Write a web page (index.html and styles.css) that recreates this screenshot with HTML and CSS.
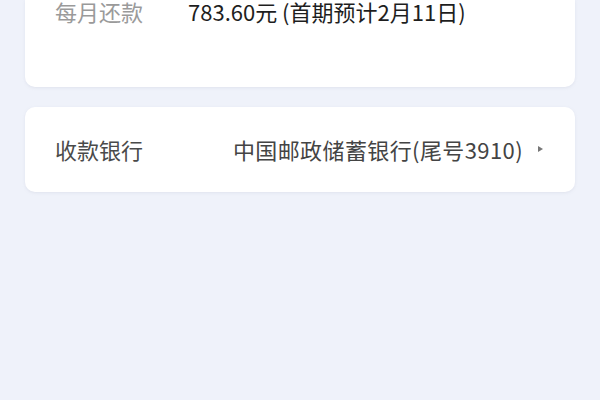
FILE: index.html
```html
<!DOCTYPE html>
<html lang="zh">
<head>
<meta charset="utf-8">
<link rel="stylesheet" href="styles.css">
</head>
<body>
<div class="page">
  <div class="card card-top">
    <div class="row">
      <span class="label muted">每月还款</span>
      <span class="value">783.60元 (首期预计2月11日)</span>
    </div>
  </div>
  <div class="card card-bank">
    <div class="row between">
      <span class="label">收款银行</span>
      <span class="bank">中国邮政储蓄银行(尾号3910)<span class="tri"></span></span>
    </div>
  </div>
</div>
</body>
</html>
```
FILE: styles.css
```css
html, body {
  margin: 0;
  padding: 0;
  background: #eff2fa;
  height: 100%;
}
.page {
  display: flex;
  flex-direction: column;
  gap: 20px;
  padding: 0 25px;
  font-family: "Noto Sans CJK SC", "Noto Sans", sans-serif;
  font-size: 22px;
}
.card {
  background: #ffffff;
  border-radius: 10px;
  box-shadow: 0 1px 3px rgba(180, 185, 205, 0.25);
}
.card-top {
  border-radius: 0 0 10px 10px;
  padding: 0 30px 65px;
}
.card-top .row {
  line-height: 22px;
  height: 22px;
}
.row {
  display: flex;
  align-items: center;
  line-height: 30px;
}
.label {
  color: #4a4a4a;
}
.muted {
  color: #9a9a9a;
  width: 133px;
  flex: none;
}
.value {
  color: #1e1e1e;
}
.card-bank {
  height: 85px;
  padding: 0 32px 2px 30px;
  box-sizing: border-box;
  display: flex;
  flex-direction: column;
  justify-content: center;
}
.between {
  justify-content: space-between;
}
.bank {
  color: #444444;
  display: flex;
  align-items: center;
  letter-spacing: 0.4px;
}
.tri {
  display: inline-block;
  width: 0;
  height: 0;
  margin-left: 15px;
  border-left: 5px solid #777;
  border-top: 3.5px solid transparent;
  border-bottom: 3.5px solid transparent;
}
```
